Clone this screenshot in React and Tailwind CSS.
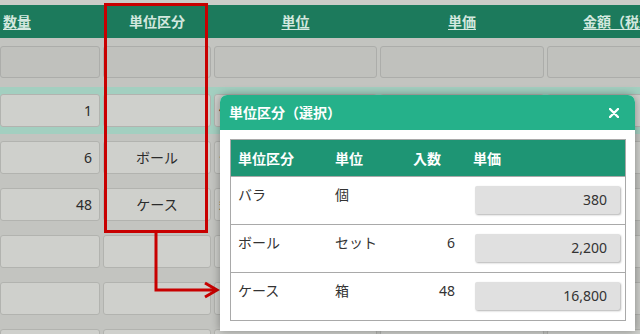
import React from 'react';

const rows = [
  { qty: '1', kubun: '', unit: '個', hl: true },
  { qty: '6', kubun: 'ボール', unit: 'セット' },
  { qty: '48', kubun: 'ケース', unit: '箱' },
  { qty: '', kubun: '', unit: '' },
  { qty: '', kubun: '', unit: '' },
  { qty: '', kubun: '', unit: '' },
];

const options = [
  { kubun: 'バラ', unit: '個', irisu: '', price: '380' },
  { kubun: 'ボール', unit: 'セット', irisu: '6', price: '2,200' },
  { kubun: 'ケース', unit: '箱', irisu: '48', price: '16,800' },
];

const cell = 'h-[33px] flex-none rounded-[3px] border border-[#b2b3af] bg-[#cfd0cc] flex items-center text-[14px] text-[#2b2b2b]';

export default function App() {
  return (
    <div className="relative w-[640px] h-[334px] overflow-hidden bg-[#c3c4c0] font-['Noto_Sans','Noto_Sans_CJK_JP',sans-serif]">
      {/* top strip */}
      <div className="h-[5px] bg-[#cbccc8]" />

      {/* Header */}
      <div className="h-[33px] bg-[#1c7a5c] flex gap-[3px] items-center text-[14px] font-bold text-[#d3e8df] leading-none">
        <div className="w-[100px] flex-none pl-[3px]"><span className="underline underline-offset-2">数量</span></div>
        <div className="w-[108px] flex-none text-center">単位区分</div>
        <div className="w-[163px] flex-none text-center"><span className="underline underline-offset-2">単位</span></div>
        <div className="w-[164px] flex-none text-center"><span className="underline underline-offset-2">単価</span></div>
        <div className="w-[156px] flex-none text-center whitespace-nowrap"><span className="underline underline-offset-2">金額（税込）</span></div>
      </div>

      {/* Filter row */}
      <div className="flex gap-[3px] pt-[8px] pb-[9px]">
        <div className="w-[100px] h-[32px] flex-none rounded-[3px] border border-[#acadaa] bg-[#c0c1bd]" />
        <div className="w-[108px] h-[32px] flex-none rounded-[3px] border border-[#acadaa] bg-[#c0c1bd]" />
        <div className="w-[163px] h-[32px] flex-none rounded-[3px] border border-[#acadaa] bg-[#c0c1bd]" />
        <div className="w-[164px] h-[32px] flex-none rounded-[3px] border border-[#acadaa] bg-[#c0c1bd]" />
        <div className="w-[156px] h-[32px] flex-none rounded-[3px] border border-[#acadaa] bg-[#c0c1bd]" />
      </div>

      {/* Rows */}
      {rows.map((r, i) => (
        <div key={i} className={`flex gap-[3px] py-[7px] ${r.hl ? 'bg-[#a3cfc0]' : ''}`}>
          <div className={`${cell} w-[100px] justify-end pr-[7px]`}>{r.qty}</div>
          <div className={`${cell} w-[108px] justify-center`}>{r.kubun}</div>
          <div className={`${cell} w-[163px] pl-[4px]`}>{r.unit}</div>
          <div className={`${cell} w-[164px]`} />
          <div className={`${cell} w-[156px]`} />
        </div>
      ))}

      {/* Annotation: highlight box + arrow */}
      <div className="absolute left-[104px] top-[3px] w-[104px] h-[230px] border-[3px] border-[#c80000]" />
      <svg className="absolute left-0 top-0" width="640" height="334" fill="none">
        <path d="M156 232 V290 H216" stroke="#c80000" strokeWidth="3" />
        <path d="M205 283 L217 290 L205 297" stroke="#c80000" strokeWidth="3" />
      </svg>

      {/* Modal */}
      <div className="absolute left-[220px] top-[95px] w-[415px] h-[236px] bg-white rounded-t-[7px] shadow-[0_0_10px_rgba(0,0,0,0.35)] flex flex-col">
        <div className="h-[35px] flex-none bg-[#25b18a] rounded-t-[7px] flex items-center justify-between pl-[9px] pr-[16px] text-white font-bold text-[14px]">
          <span>単位区分（選択）</span>
          <svg width="10" height="10" viewBox="0 0 10 10">
            <path d="M1 1 L9 9 M9 1 L1 9" stroke="#fff" strokeWidth="2.4" strokeLinecap="round" />
          </svg>
        </div>
        <div className="pl-[10px] pr-[9px] pt-[9px]">
          <div className="border border-[#a9a9a9]">
            <div className="h-[36px] bg-[#1e9574] flex items-center text-white font-bold text-[14px]">
              <div className="w-[96px] flex-none pl-[7px]">単位区分</div>
              <div className="w-[78px] flex-none pl-[8px]">単位</div>
              <div className="w-[60px] flex-none pl-[8px]">入数</div>
              <div className="flex-1 pl-[8px]">単価</div>
            </div>
            {options.map((o, i) => (
              <div key={i} className="h-[48px] flex border-t border-[#a9a9a9] text-[14px] text-[#333] leading-[20px]">
                <div className="w-[96px] flex-none pl-[7px] pt-[8px]">{o.kubun}</div>
                <div className="w-[78px] flex-none pl-[8px] pt-[8px]">{o.unit}</div>
                <div className="w-[60px] flex-none pr-[10px] pt-[8px] text-right">{o.irisu}</div>
                <div className="flex-1 pl-[10px] pr-[5px] pt-[9px]">
                  <div className="h-[28px] rounded-[2px] bg-[#e0e0e0] shadow-[1px_1px_2px_rgba(0,0,0,0.3)] flex items-center justify-end pr-[13px]">
                    {o.price}
                  </div>
                </div>
              </div>
            ))}
          </div>
        </div>
      </div>
    </div>
  );
}
